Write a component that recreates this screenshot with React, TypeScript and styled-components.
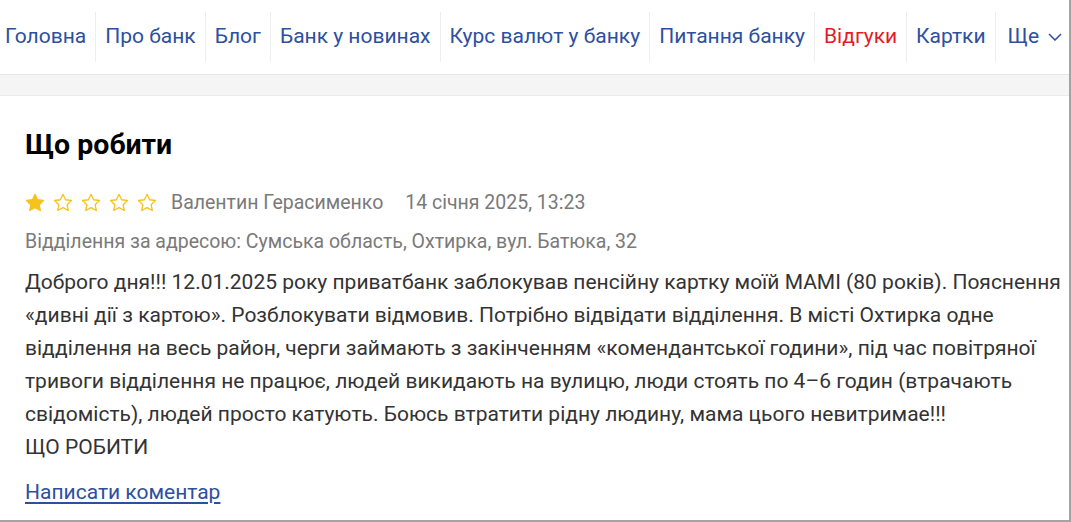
import styled, { createGlobalStyle } from "styled-components";

const GlobalStyle = createGlobalStyle`
  html, body {
    margin: 0;
    padding: 0;
    background: #ffffff;
  }
  body {
    font-family: Roboto, "Noto Sans", sans-serif;
  }
`;

const navItems = [
  { label: "Головна" },
  { label: "Про банк" },
  { label: "Блог" },
  { label: "Банк у новинах" },
  { label: "Курс валют у банку" },
  { label: "Питання банку" },
  { label: "Відгуки", active: true },
  { label: "Картки" },
];

function Star({ filled }: { filled?: boolean }) {
  return (
    <svg width="20" height="19" viewBox="0 0 24 23">
      <path
        d="M12 1.6l3.1 6.6 7.2.9-5.3 5 1.4 7.1L12 17.7l-6.4 3.5L7 14.1l-5.3-5 7.2-.9z"
        fill={filled ? "#f7c21b" : "#ffffff"}
        stroke="#f7c21b"
        strokeWidth="1.6"
        strokeLinejoin="round"
      />
    </svg>
  );
}

export default function App() {
  return (
    <>
      <GlobalStyle />
      <S.Frame>
        <S.Nav>
          {navItems.map((item) => (
            <S.NavItem key={item.label} $active={item.active}>
              {item.label}
            </S.NavItem>
          ))}
          <S.NavItem $more>
            Ще
            <svg width="14" height="8" viewBox="0 0 14 8">
              <path d="M1 1l6 6 6-6" fill="none" stroke="#2d4f9f" strokeWidth="1.5" />
            </svg>
          </S.NavItem>
        </S.Nav>

        <S.Gap />

        <S.Card>
          <S.Title>Що робити</S.Title>

          <S.Meta>
            <S.Stars>
              <Star filled />
              <Star />
              <Star />
              <Star />
              <Star />
            </S.Stars>
            <span>Валентин Герасименко</span>
            <span>14 січня 2025, 13:23</span>
          </S.Meta>

          <S.Address>Відділення за адресою: Сумська область, Охтирка, вул. Батюка, 32</S.Address>

          <S.Body>
            Доброго дня!!! 12.01.2025 року приватбанк заблокував пенсійну картку моїй МАМІ (80 років). Пояснення
            «дивні дії з картою». Розблокувати відмовив. Потрібно відвідати відділення. В місті Охтирка одне
            відділення на весь район, черги займають з закінченням «комендантської години», під час повітряної
            тривоги відділення не працює, людей викидають на вулицю, люди стоять по 4–6 годин (втрачають
            свідомість), людей просто катують. Боюсь втратити рідну людину, мама цього невитримае!!!
            <br />
            ЩО РОБИТИ
          </S.Body>

          <S.CommentLink href="#">Написати коментар</S.CommentLink>
        </S.Card>
      </S.Frame>
    </>
  );
}

const S = {
  Frame: styled.div`
    box-sizing: border-box;
    width: 1071px;
    height: 522px;
    border-right: 2px solid #a3a3a3;
    border-bottom: 2px solid #a3a3a3;
    display: flex;
    flex-direction: column;
    overflow: hidden;
  `,

  Nav: styled.nav`
    display: flex;
    align-items: stretch;
    padding: 12px 0;
    height: 50px;
    background: #ffffff;
    border-bottom: 1px solid #e6e6e6;
  `,

  NavItem: styled.div<{ $active?: boolean; $more?: boolean }>`
    display: flex;
    align-items: center;
    gap: 9px;
    padding: 0 9px 3px ${(p) => (p.$more ? "12px" : "9px")};
    border-left: 1px solid #eeeeee;
    font-size: 21px;
    color: ${(p) => (p.$active ? "#e41b23" : "#2d4f9f")};
    white-space: nowrap;
    &:first-child {
      border-left: none;
      padding-left: 5px;
    }
    svg {
      margin-top: 2px;
    }
  `,

  Gap: styled.div`
    height: 20px;
    background: #f5f5f5;
    border-bottom: 1px solid #ececec;
  `,

  Card: styled.section`
    flex: 1;
    padding: 32px 0 0 25px;
    background: #ffffff;
  `,

  Title: styled.h1`
    margin: 0;
    font-size: 28.5px;
    line-height: 34px;
    font-weight: 700;
    color: #000000;
  `,

  Meta: styled.div`
    display: flex;
    align-items: center;
    gap: 22px;
    margin-top: 28px;
    height: 24px;
    font-size: 19.5px;
    color: #7a7a7a;
  `,

  Stars: styled.div`
    display: flex;
    gap: 8px;
    margin-right: -8px;
  `,

  Address: styled.div`
    margin-top: 16px;
    font-size: 19.5px;
    line-height: 24px;
    color: #7a7a7a;
  `,

  Body: styled.p`
    margin: 12px 0 0;
    font-size: 21px;
    line-height: 33px;
    color: #333333;
    padding-right: 2px;
  `,

  CommentLink: styled.a`
    display: inline-block;
    margin-top: 16px;
    font-size: 21px;
    line-height: 24px;
    color: #2d4f9f;
    text-decoration: underline;
    text-underline-offset: 3px;
  `,
};
